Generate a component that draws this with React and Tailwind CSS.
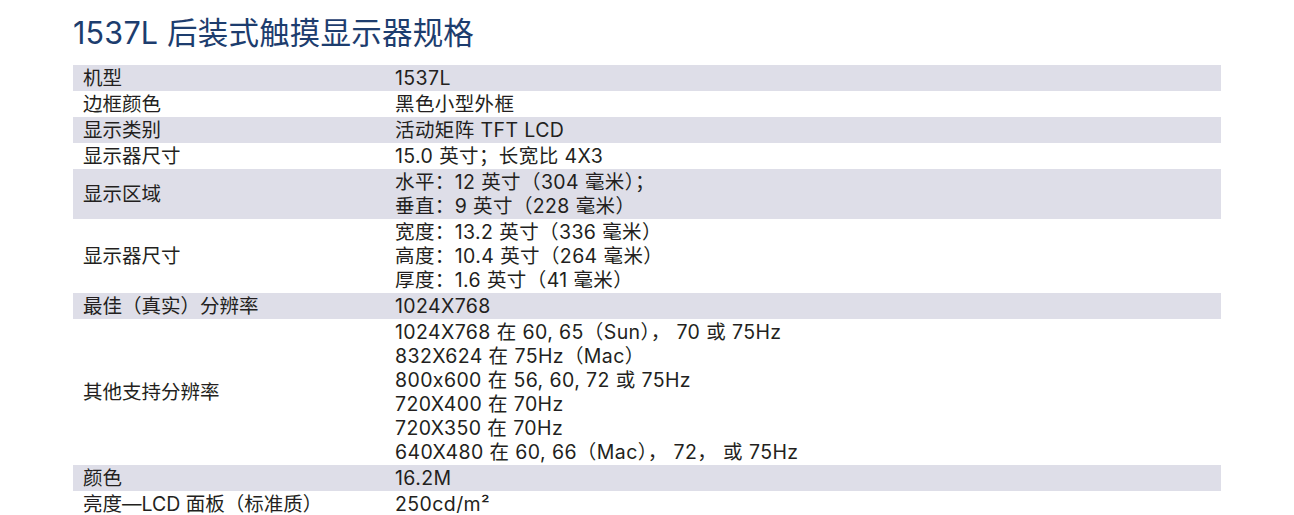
import React from "react";

const rows = [
  { label: "机型", lines: ["1537L"] },
  { label: "边框颜色", lines: ["黑色小型外框"] },
  { label: "显示类别", lines: ["活动矩阵 TFT LCD"] },
  { label: "显示器尺寸", lines: ["15.0 英寸；长宽比 4X3"] },
  { label: "显示区域", lines: ["水平：12 英寸（304 毫米）；", "垂直：9 英寸（228 毫米）"] },
  { label: "显示器尺寸", lines: ["宽度：13.2 英寸（336 毫米）", "高度：10.4 英寸（264 毫米）", "厚度：1.6 英寸（41 毫米）"] },
  { label: "最佳（真实）分辨率", lines: ["1024X768"] },
  {
    label: "其他支持分辨率",
    lines: [
      "1024X768 在 60, 65（Sun）， 70 或 75Hz",
      "832X624 在 75Hz（Mac）",
      "800x600 在 56, 60, 72 或 75Hz",
      "720X400 在 70Hz",
      "720X350 在 70Hz",
      "640X480 在 60, 66（Mac）， 72， 或 75Hz",
    ],
  },
  { label: "颜色", lines: ["16.2M"] },
  { label: "亮度—LCD 面板（标准质）", lines: ["250cd/m²"] },
];

export default function App() {
  return (
    <div
      className="w-[1294px] h-[515px] overflow-hidden bg-white text-[#231f20] [font-feature-settings:'calt'_0]"
      style={{ fontFamily: '"Inter", "Noto Sans CJK SC", sans-serif' }}
    >
      <div className="pl-[73px] pr-[73px]">
        <h1 className="pt-[13px] h-[65px] text-[30.5px] leading-[40px] text-[#1d3d6e] font-normal tracking-[0.2px]">
          1537L 后装式触摸显示器规格
        </h1>
        <div className="flex flex-col">
          {rows.map((r, i) => (
            <div
              key={i}
              className={`flex py-px text-[19.5px] leading-[24px] ${i % 2 === 0 ? "bg-[#dedee8]" : "bg-white"}`}
            >
              <div className="w-[322px] pl-[10px] flex items-center">{r.label}</div>
              <div className="flex-1 flex flex-col">
                {r.lines.map((l, j) => (
                  <div key={j} className="whitespace-pre tracking-[0.4px]">{l}</div>
                ))}
              </div>
            </div>
          ))}
        </div>
      </div>
    </div>
  );
}
